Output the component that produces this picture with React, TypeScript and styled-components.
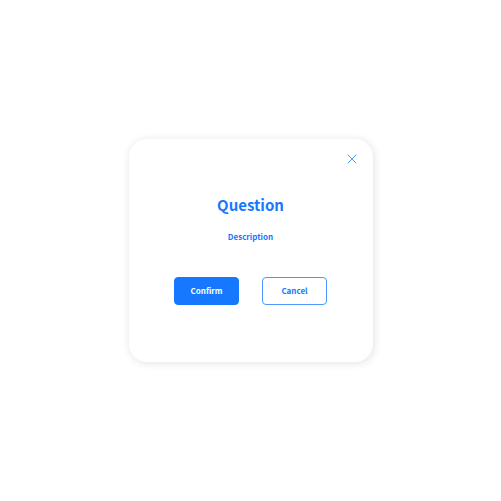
import React from 'react';
import styled, { createGlobalStyle } from 'styled-components';

const Popup = () => {
  return (
    <PopupContainer role="dialog" aria-labelledby="popup-title">
      <CloseBtn type="button" aria-label="Close">
        <svg width="10" height="10" viewBox="0 0 10 10">
          <path d="M1 1L9 9M9 1L1 9" stroke="#4d97ff" strokeLinecap="round" />
        </svg>
      </CloseBtn>
      <Title id="popup-title">Question</Title>
      <Description>Description</Description>
      <BtnBox>
        <CustomBtn type="button" $primary>
          Confirm
        </CustomBtn>
        <CustomBtn type="button">Cancel</CustomBtn>
      </BtnBox>
    </PopupContainer>
  );
};

const App = () => {
  return (
    <>
      <GlobalStyle />
      <Page>
        <Popup />
      </Page>
    </>
  );
};

const GlobalStyle = createGlobalStyle`
  * {
    box-sizing: border-box;
  }
  body {
    margin: 0;
    background-color: #fff;
    font-family: 'Noto Sans CJK KR', sans-serif;
  }
`;

const Page = styled.main`
  display: flex;
  justify-content: center;
  align-items: center;
  min-height: 100vh;
  padding: 16px;
`;

const PopupContainer = styled.section`
  display: flex;
  flex-direction: column;
  align-items: center;
  width: 100%;
  max-width: 244px;
  padding: 11px 12px 57px;
  border-radius: 18px;
  background-color: #fff;
  box-shadow: 1px 1px 8px rgba(0, 0, 0, 0.12);
  color: #1677ff;
`;

const CloseBtn = styled.button`
  display: flex;
  align-self: flex-end;
  padding: 4px;
  border: none;
  background: none;
  cursor: pointer;
`;

const Title = styled.h1`
  margin: 25px 0 0;
  font-size: 15px;
  font-weight: 700;
  line-height: 24px;
`;

const Description = styled.p`
  margin: 12px 0 0;
  font-size: 8px;
  font-weight: 700;
  line-height: 16px;
`;

const BtnBox = styled.div`
  display: flex;
  gap: 23px;
  margin-top: 32px;
`;

const CustomBtn = styled.button<{ $primary?: boolean }>`
  width: 65px;
  height: 28px;
  padding: 0 0 2px;
  border: 1px solid ${(props) => (props.$primary ? '#1677ff' : '#4d97ff')};
  border-radius: 4px;
  background-color: ${(props) => (props.$primary ? '#1677ff' : '#fff')};
  color: ${(props) => (props.$primary ? '#fff' : '#1677ff')};
  font-family: inherit;
  font-size: 8px;
  font-weight: 700;
  cursor: pointer;
`;

export default App;
